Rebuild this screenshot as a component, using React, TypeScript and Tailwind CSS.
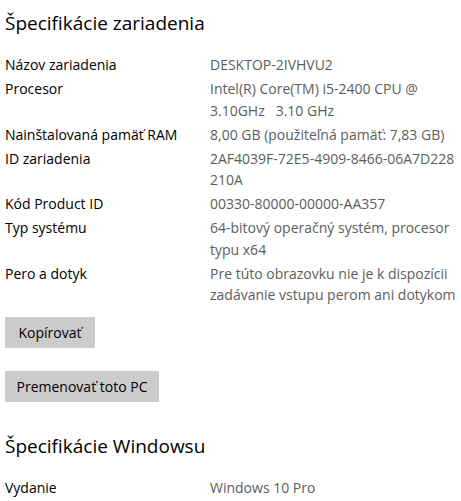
import React from "react";

const rows: { label: string; value: string[] }[] = [
  { label: "Názov zariadenia", value: ["DESKTOP-2IVHVU2"] },
  { label: "Procesor", value: ["Intel(R) Core(TM) i5-2400 CPU @", "3.10GHz   3.10 GHz"] },
  { label: "Nainštalovaná pamäť RAM", value: ["8,00 GB (použiteľná pamäť: 7,83 GB)"] },
  { label: "ID zariadenia", value: ["2AF4039F-72E5-4909-8466-06A7D228", "210A"] },
  { label: "Kód Product ID", value: ["00330-80000-00000-AA357"] },
  { label: "Typ systému", value: ["64-bitový operačný systém, procesor", "typu x64"] },
  { label: "Pero a dotyk", value: ["Pre túto obrazovku nie je k dispozícii", "zadávanie vstupu perom ani dotykom"] },
];

export default function App() {
  return (
    <div
      className="w-[461px] h-[501px] overflow-hidden bg-white pl-[5px] pt-[9px] text-black"
      style={{ fontFamily: '"Open Sans", "Noto Sans", sans-serif' }}
    >
      <h1 className="text-[19px] leading-[28px] font-normal text-black">Špecifikácie zariadenia</h1>
      <div className="mt-[17px] grid grid-cols-[205px_245px] gap-y-[2.5px] text-[14px] leading-[21.5px]">
        {rows.map((r) => (
          <React.Fragment key={r.label}>
            <div className="text-black">{r.label}</div>
            <div className="text-[#5d5d5d] whitespace-pre">
              {r.value.map((v, i) => (
                <div key={i}>{v}</div>
              ))}
            </div>
          </React.Fragment>
        ))}
      </div>
      <div className="mt-[11px] flex flex-col items-start gap-[23px]">
        <button className="h-[31px] w-[90px] bg-[#cccccc] text-[14px] text-black">Kopírovať</button>
        <button className="h-[31px] w-[154px] bg-[#cccccc] text-[14px] text-black">Premenovať toto PC</button>
      </div>
      <h1 className="mt-[30px] text-[19px] leading-[28px] font-normal text-black">Špecifikácie Windowsu</h1>
      <div className="mt-[17px] grid grid-cols-[205px_245px] text-[14px] leading-[21.5px]">
        <div>Vydanie</div>
        <div className="text-[#5d5d5d]">Windows 10 Pro</div>
      </div>
    </div>
  );
}
